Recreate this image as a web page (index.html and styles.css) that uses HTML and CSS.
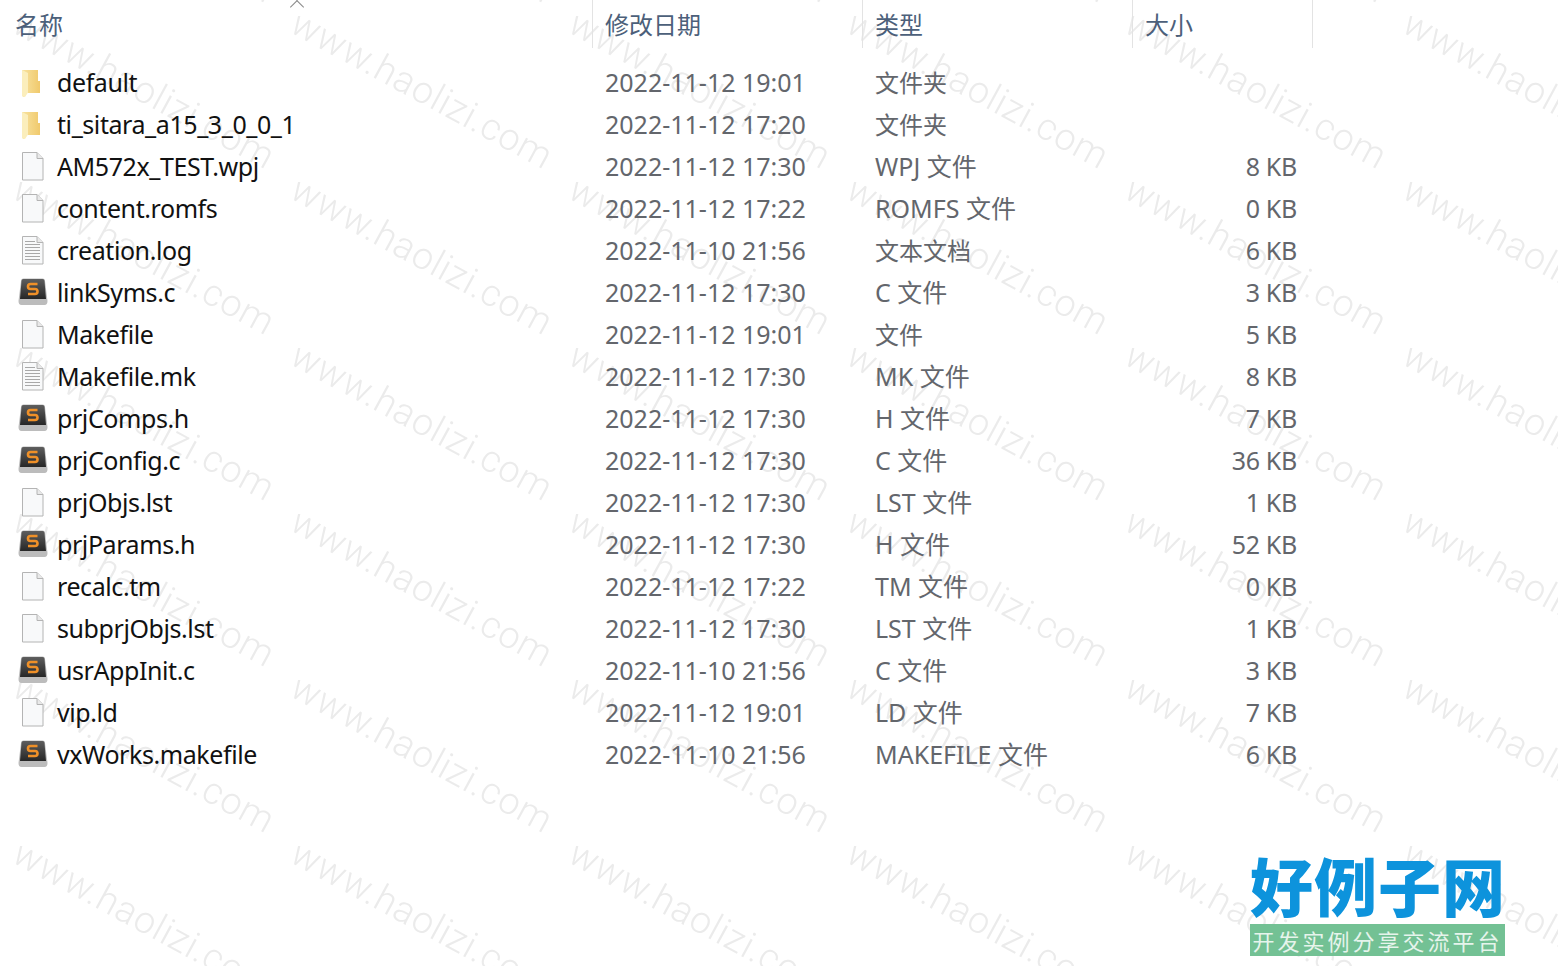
FILE: index.html

```html
<!DOCTYPE html>
<html lang="zh-CN">
<head>
    <meta charset="UTF-8">
    <title>文件列表</title>
    <link rel="stylesheet" href="styles.css">
</head>
<body>
    <svg class="watermark" aria-hidden="true">
        <defs>
            <pattern id="wm" patternUnits="userSpaceOnUse" x="14" y="16" width="278" height="166">
                <text class="wm-text" transform="translate(-4 15) rotate(28.5)">www.haolizi.com</text>
            </pattern>
        </defs>
        <rect width="100%" height="100%" fill="url(#wm)"></rect>
    </svg>

    <svg class="icon-defs" aria-hidden="true">
        <defs>
            <linearGradient id="folderFill" x1="0" y1="0" x2="1" y2="0">
                <stop offset="0" stop-color="#f8e3a0"></stop>
                <stop offset="1" stop-color="#f0c96c"></stop>
            </linearGradient>
            <linearGradient id="sublimeFill" x1="0" y1="0" x2="0" y2="1">
                <stop offset="0" stop-color="#5e5e5e"></stop>
                <stop offset="1" stop-color="#262626"></stop>
            </linearGradient>
            <symbol id="i-folder" viewBox="0 0 30 30">
                <path d="M4 2 H20 V13 H22 V25 H9 L6 29 L4 28 Z" fill="url(#folderFill)"></path>
                <path d="M4 2 L10 5 V24.5 L7 29 L4 28 Z" fill="#fbeebc"></path>
            </symbol>
            <symbol id="i-file" viewBox="0 0 30 30">
                <path d="M4.5 .5 H19 L25 6.5 V28 H4.5 Z" fill="#f8f9fa" stroke="#b4b4b4"></path>
                <path d="M19 .5 V6.5 H25" fill="#e9e9e9" stroke="#b4b4b4"></path>
            </symbol>
            <symbol id="i-text" viewBox="0 0 30 30">
                <path d="M4.5 .5 H19 L25 6.5 V28 H4.5 Z" fill="#f8f9fa" stroke="#b4b4b4"></path>
                <path d="M19 .5 V6.5 H25" fill="#e9e9e9" stroke="#b4b4b4"></path>
                <path d="M7 5.5 H17 M7 8.5 H22 M7 11.5 H22 M7 14.5 H22 M7 17.5 H22 M7 20.5 H22 M7 23.5 H22" stroke="#a8a8a8" fill="none"></path>
            </symbol>
            <symbol id="i-sublime" viewBox="0 0 30 30">
                <path d="M3 3 Q3 0.5 5.5 0.5 H24.5 Q27 0.5 27 3 L29.5 23 Q29.5 27 26.5 27 H3.5 Q0.5 27 0.5 23 Z" fill="#bcbcbc"></path>
                <path d="M3.5 3 Q3.5 1 5.5 1 H24.5 Q26.5 1 26.5 3 L28 21 H2 Z" fill="url(#sublimeFill)"></path>
                <path d="M19.5 6 H12.5 Q10 6 10 8.5 Q10 11 12.5 11 H17 Q19.5 11 19.5 13.5 Q19.5 16 17 16 H10" fill="none" stroke="#ef9028" stroke-width="2.6"></path>
            </symbol>
        </defs>
    </svg>

    <div class="list">
        <div class="row head">
            <div class="cell name">名称<span class="sort"></span></div>
            <div class="cell">修改日期</div>
            <div class="cell">类型</div>
            <div class="cell">大小</div>
        </div>
        <div class="rows">
            <div class="row"><div class="cell name"><svg class="icon"><use href="#i-folder"></use></svg>default</div><div class="cell">2022-11-12 19:01</div><div class="cell type-zh">文件夹</div><div class="cell size"></div></div>
            <div class="row"><div class="cell name"><svg class="icon"><use href="#i-folder"></use></svg>ti_sitara_a15_3_0_0_1</div><div class="cell">2022-11-12 17:20</div><div class="cell type-zh">文件夹</div><div class="cell size"></div></div>
            <div class="row"><div class="cell name"><svg class="icon"><use href="#i-file"></use></svg>AM572x_TEST.wpj</div><div class="cell">2022-11-12 17:30</div><div class="cell">WPJ 文件</div><div class="cell size">8 KB</div></div>
            <div class="row"><div class="cell name"><svg class="icon"><use href="#i-file"></use></svg>content.romfs</div><div class="cell">2022-11-12 17:22</div><div class="cell">ROMFS 文件</div><div class="cell size">0 KB</div></div>
            <div class="row"><div class="cell name"><svg class="icon"><use href="#i-text"></use></svg>creation.log</div><div class="cell">2022-11-10 21:56</div><div class="cell type-zh">文本文档</div><div class="cell size">6 KB</div></div>
            <div class="row"><div class="cell name"><svg class="icon"><use href="#i-sublime"></use></svg>linkSyms.c</div><div class="cell">2022-11-12 17:30</div><div class="cell">C 文件</div><div class="cell size">3 KB</div></div>
            <div class="row"><div class="cell name"><svg class="icon"><use href="#i-file"></use></svg>Makefile</div><div class="cell">2022-11-12 19:01</div><div class="cell type-zh">文件</div><div class="cell size">5 KB</div></div>
            <div class="row"><div class="cell name"><svg class="icon"><use href="#i-text"></use></svg>Makefile.mk</div><div class="cell">2022-11-12 17:30</div><div class="cell">MK 文件</div><div class="cell size">8 KB</div></div>
            <div class="row"><div class="cell name"><svg class="icon"><use href="#i-sublime"></use></svg>prjComps.h</div><div class="cell">2022-11-12 17:30</div><div class="cell">H 文件</div><div class="cell size">7 KB</div></div>
            <div class="row"><div class="cell name"><svg class="icon"><use href="#i-sublime"></use></svg>prjConfig.c</div><div class="cell">2022-11-12 17:30</div><div class="cell">C 文件</div><div class="cell size">36 KB</div></div>
            <div class="row"><div class="cell name"><svg class="icon"><use href="#i-file"></use></svg>prjObjs.lst</div><div class="cell">2022-11-12 17:30</div><div class="cell">LST 文件</div><div class="cell size">1 KB</div></div>
            <div class="row"><div class="cell name"><svg class="icon"><use href="#i-sublime"></use></svg>prjParams.h</div><div class="cell">2022-11-12 17:30</div><div class="cell">H 文件</div><div class="cell size">52 KB</div></div>
            <div class="row"><div class="cell name"><svg class="icon"><use href="#i-file"></use></svg>recalc.tm</div><div class="cell">2022-11-12 17:22</div><div class="cell">TM 文件</div><div class="cell size">0 KB</div></div>
            <div class="row"><div class="cell name"><svg class="icon"><use href="#i-file"></use></svg>subprjObjs.lst</div><div class="cell">2022-11-12 17:30</div><div class="cell">LST 文件</div><div class="cell size">1 KB</div></div>
            <div class="row"><div class="cell name"><svg class="icon"><use href="#i-sublime"></use></svg>usrAppInit.c</div><div class="cell">2022-11-10 21:56</div><div class="cell">C 文件</div><div class="cell size">3 KB</div></div>
            <div class="row"><div class="cell name"><svg class="icon"><use href="#i-file"></use></svg>vip.ld</div><div class="cell">2022-11-12 19:01</div><div class="cell">LD 文件</div><div class="cell size">7 KB</div></div>
            <div class="row"><div class="cell name"><svg class="icon"><use href="#i-sublime"></use></svg>vxWorks.makefile</div><div class="cell">2022-11-10 21:56</div><div class="cell">MAKEFILE 文件</div><div class="cell size">6 KB</div></div>
        </div>
    </div>

    <div class="logo">
        <div class="logo-title">好例子网</div>
        <div class="logo-sub">开发实例分享交流平台</div>
    </div>
</body>
</html>
```

FILE: styles.css

```css
html, body {
    margin: 0;
    padding: 0;
    height: 966px;
    overflow: hidden;
    background-color: #fff;
}
body {
    font-family: "Noto Sans", "Noto Sans CJK SC", sans-serif;
    font-size: 25px;
    position: relative;
}
.watermark {
    position: absolute;
    left: 0;
    top: 0;
    width: 1558px;
    height: 966px;
}
.wm-text {
    font-family: Roboto, sans-serif;
    font-weight: 300;
    font-size: 37.5px;
    letter-spacing: 0.8px;
    fill: #ebebeb;
}
.icon-defs {
    position: absolute;
    width: 0;
    height: 0;
}
.list {
    position: relative;
    width: 1312px;
}
.row {
    display: grid;
    grid-template-columns: 605px 270px 270px 152px;
    height: 42px;
    align-items: start;
    line-height: 40px;
    color: #63666c;
    white-space: nowrap;
}
.rows {
    padding-top: 14px;
}
.cell.name {
    display: flex;
    align-items: flex-start;
    padding-left: 18px;
    letter-spacing: -0.42px;
    color: #111;
}
.cell.size {
    text-align: right;
    letter-spacing: -0.3px;
}
.cell.type-zh {
    font-size: 24px;
    line-height: 42px;
}
.icon {
    width: 30px;
    height: 30px;
    margin-top: 6px;
    margin-right: 9px;
    flex: none;
}
.head {
    height: 48px;
    line-height: 50px;
    font-size: 24px;
    color: #4c607a;
    background-image: linear-gradient(#e3e3e3, #e3e3e3), linear-gradient(#e3e3e3, #e3e3e3), linear-gradient(#e3e3e3, #e3e3e3), linear-gradient(#e3e3e3, #e3e3e3);
    background-size: 1px 100%;
    background-repeat: no-repeat;
    background-position: 592px 0, 862px 0, 1132px 0, 1312px 0;
    width: 1313px;
}
.head .cell.name {
    padding-left: 15px;
    letter-spacing: 0;
    color: #4c607a;
}
.sort {
    position: absolute;
    left: 292px;
    top: 2px;
    width: 9px;
    height: 9px;
    border-left: 1px solid #8a8a8a;
    border-top: 1px solid #8a8a8a;
    transform: rotate(45deg);
}
.logo {
    position: absolute;
    left: 1250px;
    top: 848px;
    width: 255px;
}
.logo-title {
    font-family: "Noto Sans CJK SC", sans-serif;
    font-weight: 900;
    font-size: 63px;
    line-height: 72px;
    letter-spacing: 1px;
    color: #0d93dc;
    white-space: nowrap;
}
.logo-sub {
    margin-top: 4px;
    background-color: #73c194;
    color: #e6f4ec;
    font-family: "Noto Sans CJK SC", sans-serif;
    font-size: 22px;
    letter-spacing: 3px;
    line-height: 32px;
    height: 32px;
    text-align: center;
    white-space: nowrap;
    overflow: hidden;
}
```
